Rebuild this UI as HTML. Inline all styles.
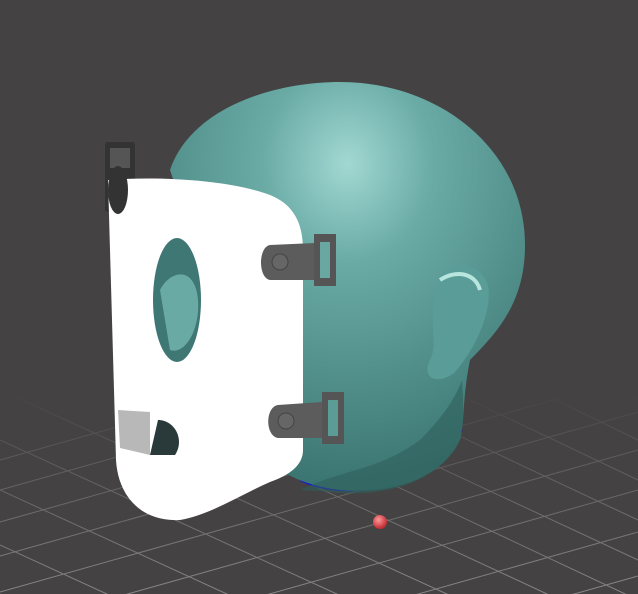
<!DOCTYPE html>
<html><head><style>html,body{margin:0;padding:0;background:#444242;overflow:hidden;width:638px;height:594px}svg{display:block}</style></head>
<body>
<svg width="638" height="594" viewBox="0 0 638 594" xmlns="http://www.w3.org/2000/svg">
<defs>
<linearGradient id="fade" x1="0" y1="0" x2="0" y2="1">
<stop offset="0" stop-color="#fff" stop-opacity="0"/><stop offset="0.3" stop-color="#fff" stop-opacity="0.3"/><stop offset="1" stop-color="#fff" stop-opacity="0.9"/></linearGradient>
<mask id="m"><rect x="0" y="390" width="638" height="204" fill="url(#fade)"/></mask>
<radialGradient id="head" cx="0.5" cy="0.2" r="0.8">
<stop offset="0" stop-color="#a2d8d2"/><stop offset="0.3" stop-color="#6aaba6"/><stop offset="1" stop-color="#3a7470"/></radialGradient>
<radialGradient id="ball" cx="0.4" cy="0.35" r="0.6"><stop offset="0" stop-color="#ff9a9a"/><stop offset="1" stop-color="#c22f36"/></radialGradient>
</defs>
<rect width="638" height="594" fill="#444242"/>
<g mask="url(#m)" stroke="#a8a8a8" stroke-width="1" opacity="0.75">
<line x1="0" y1="460" x2="638" y2="280"/><line x1="0" y1="490" x2="638" y2="310"/><line x1="0" y1="522" x2="638" y2="342"/>
<line x1="0" y1="556" x2="638" y2="376"/><line x1="0" y1="592" x2="638" y2="412"/><line x1="0" y1="630" x2="638" y2="450"/>
<line x1="0" y1="670" x2="638" y2="490"/><line x1="0" y1="712" x2="638" y2="532"/><line x1="0" y1="756" x2="638" y2="576"/>
<line x1="0" y1="802" x2="638" y2="622"/>
<line x1="0" y1="300" x2="638" y2="600"/><line x1="0" y1="340" x2="560" y2="600"/><line x1="0" y1="390" x2="460" y2="600"/>
<line x1="0" y1="440" x2="350" y2="600"/><line x1="0" y1="490" x2="240" y2="600"/><line x1="0" y1="545" x2="120" y2="600"/>
<line x1="80" y1="300" x2="638" y2="560"/><line x1="170" y1="300" x2="638" y2="520"/><line x1="260" y1="300" x2="638" y2="480"/>
<line x1="350" y1="300" x2="638" y2="440"/><line x1="440" y1="300" x2="638" y2="400"/>
</g>
<!-- neck base -->
<path d="M300 480 C340 500 420 495 462 430" fill="none" stroke="#1a1ad0" stroke-width="2"/>
<!-- head -->
<path d="M170 170 C190 110 270 82 340 82 C440 82 525 150 525 245 C525 300 500 330 470 360 C462 400 465 420 460 440 C440 480 390 495 340 490 C300 485 270 470 250 440 L200 260 Z" fill="url(#head)"/>
<path d="M300 490 C340 470 380 470 420 440 C440 420 455 400 462 380 C465 420 462 440 455 450 C430 485 380 498 330 492 Z" fill="#2f5f5c" opacity="0.6"/>
<!-- ear -->
<path d="M440 275 C455 262 480 262 488 285 C492 310 478 345 455 372 C440 385 420 380 430 360 C440 340 425 320 440 275 Z" fill="#5a9d98"/>
<path d="M440 280 C455 270 475 272 480 290" stroke="#b9e5df" stroke-width="4" fill="none"/>
<!-- clip back top -->
<rect x="105" y="142" width="30" height="70" fill="#333" rx="3"/>
<rect x="110" y="148" width="20" height="20" fill="#555"/>
<!-- mask -->
<path d="M108 180 C160 176 230 180 270 195 C295 205 303 225 303 250 L303 450 C303 465 290 475 270 482 C240 495 210 515 180 520 C140 522 118 495 116 460 Z" fill="#ffffff"/>
<ellipse cx="177" cy="300" rx="24" ry="62" fill="#3f7774"/>
<path d="M160 290 C170 270 195 265 198 300 C200 330 185 355 170 350 Z" fill="#6aaaa5"/>
<path d="M118 410 L150 412 L150 455 L120 448 Z" fill="#b8b8b8"/>
<path d="M158 420 C175 420 185 440 175 455 L150 455 Z" fill="#2a3a3a"/>
<ellipse cx="118" cy="190" rx="10" ry="24" fill="#333"/>
<!-- side clips -->
<path d="M270 245 L315 243 L315 280 L270 280 C258 278 258 247 270 245 Z" fill="#5c5c5c"/>
<circle cx="280" cy="262" r="8" fill="#666" stroke="#444"/>
<rect x="314" y="234" width="22" height="52" fill="#555"/><rect x="320" y="242" width="10" height="36" fill="#6aa7a2"/>
<path d="M278 405 L322 402 L322 438 L278 438 C265 436 265 407 278 405 Z" fill="#5c5c5c"/>
<circle cx="286" cy="421" r="8" fill="#666" stroke="#444"/>
<rect x="322" y="392" width="22" height="52" fill="#555"/><rect x="328" y="400" width="10" height="36" fill="#5c9c97"/>
<circle cx="380" cy="522" r="7" fill="url(#ball)"/>
</svg>
</body></html>
